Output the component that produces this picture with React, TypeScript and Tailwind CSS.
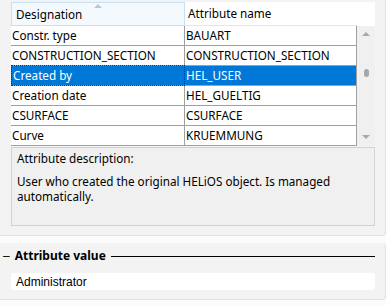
import React from 'react';

const rows = [
  ['Constr. type', 'BAUART'],
  ['CONSTRUCTION_SECTION', 'CONSTRUCTION_SECTION'],
  ['Created by', 'HEL_USER'],
  ['Creation date', 'HEL_GUELTIG'],
  ['CSURFACE', 'CSURFACE'],
  ['Curve', 'KRUEMMUNG'],
];

const ui = { fontFamily: '"Noto Sans", "Open Sans", sans-serif' };

export default function App() {
  return (
    <div className="w-[386px] h-[306px] bg-[#fbfbfb] flex flex-col text-[11.7px] text-black" style={ui}>
      {/* Attribute list panel */}
      <div className="h-[236px] bg-[#f3f3f3] border-r border-b border-[#e2e2e2] rounded-br-[4px] pt-[2px] pl-[11px] pr-[8px] flex flex-col">
        <div className="flex">
          <div className="w-[346px] flex flex-col bg-white">
            {/* header */}
            <div className="flex h-[24px]">
              <div className="relative w-[174px] bg-[#f4f9fd] border border-[#c6e1f6] flex items-center pl-[4px] pt-[1px]">
                <span className="absolute left-[82px] top-[1px] w-0 h-0 border-l-[4px] border-r-[4px] border-b-[4px] border-l-transparent border-r-transparent border-b-[#b5c9db]" />
                Designation
              </div>
              <div className="flex-1 border-b border-[#e5e5e5] flex items-center pl-[3px] pt-[1px]">Attribute name</div>
            </div>
            {/* rows */}
            {rows.map(([a, b], i) => {
              const sel = i === 2;
              return (
                <div key={i} className={`flex h-[20px] border-b border-[#a0a0a0] ${sel ? 'bg-[#0078d7] text-white' : ''}`}>
                  <div className={`w-[174px] flex items-center pl-[1px] ${sel ? 'border border-dotted border-[#1a3a2a] -mt-px h-[21px]' : 'border-r border-[#a0a0a0]'}`}>
                    {a}
                  </div>
                  <div className="flex-1 flex items-center pl-[1px] border-r border-[#a0a0a0]">{b}</div>
                </div>
              );
            })}
          </div>
          {/* scrollbar */}
          <div className="w-[18px] flex flex-col">
            <div className="h-[24px] bg-white" />
            <div className="flex-1 bg-[#f0f0f0] flex flex-col items-center pt-[6px]">
              <span className="w-0 h-0 border-l-[4px] border-r-[4px] border-b-[4px] border-l-transparent border-r-transparent border-b-[#a8a8a8]" />
              <span className="mt-[33px] w-[5px] h-[8px] rounded-full bg-[#a8a8a8]" />
              <span className="mt-[58px] w-0 h-0 border-l-[4px] border-r-[4px] border-t-[4px] border-l-transparent border-r-transparent border-t-[#a8a8a8]" />
            </div>
          </div>
        </div>
        {/* description */}
        <div className="w-[364px] h-[79px] mt-px bg-[#f0f0f0] border border-[#d2d2d2] pl-[5px] pt-[3px] leading-[15px]">
          <div>Attribute description:</div>
          <div className="mt-[8px]">User who created the original HELiOS object. Is managed automatically.</div>
        </div>
      </div>

      {/* Attribute value panel */}
      <div className="mt-[7px] h-[57px] bg-[#f3f3f3] border-r border-b border-[#e2e2e2] rounded-r-[4px] pl-[3px] pr-[10px] pt-[5px]"
        style={{ fontFamily: '"Liberation Sans", Arial, sans-serif' }}>
        <div className="flex items-center gap-[5px] h-[16px] text-[12px]">
          <span>–</span>
          <span className="font-bold" style={ui}>Attribute value</span>
          <span className="flex-1 h-px bg-black" />
        </div>
        <div className="mt-[9px] ml-[8px] h-[17px] bg-white rounded-[3px] flex items-center pl-[5px] text-[12px]">Administrator</div>
      </div>
    </div>
  );
}
